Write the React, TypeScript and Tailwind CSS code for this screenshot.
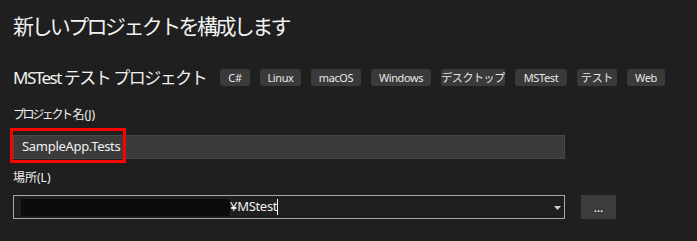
const tags = [
  { label: 'C#', w: 'w-[30px]' },
  { label: 'Linux', w: 'w-[41px]' },
  { label: 'macOS', w: 'w-[50px]' },
  { label: 'Windows', w: 'w-[60px]' },
  { label: 'デスクトップ', w: 'w-[64px]' },
  { label: 'MSTest', w: 'w-[52px]' },
  { label: 'テスト', w: 'w-[40px]' },
  { label: 'Web', w: 'w-[38px]' },
];

const font = { fontFamily: '"Noto Sans", "Noto Sans CJK JP", sans-serif' };

export default function App() {
  return (
    <div
      className="w-[697px] h-[241px] bg-[#1f1f1f] text-[#f1f1f1] pl-[13px] overflow-hidden whitespace-nowrap"
      style={font}
    >
      <h1 className="h-[32px] mt-[10px] text-[21px] leading-[32px] font-normal tracking-[-2.6px]">
        新しいプロジェクトを構成します
      </h1>

      <div className="flex items-center mt-[27px] h-[17px]">
        <h2 className="w-[207px] shrink-0 text-[17px] leading-[17px] font-normal tracking-[-1.5px]">
          MSTest テスト プロジェクト
        </h2>
        <div className="flex gap-[10px]">
          {tags.map((tag) => (
            <span
              key={tag.label}
              className={`${tag.w} shrink-0 h-[17px] rounded-[3px] bg-[#3a3a3a] text-center text-[11px] leading-[17px] text-[#e8e8e8] tracking-[-0.4px]`}
            >
              {tag.label}
            </span>
          ))}
        </div>
      </div>

      {/* project name */}
      <div className="mt-[21px] text-[12px] leading-[16px] h-[16px]">
        <span className="tracking-[-2.4px]">プロジェクト</span>
        <span className="ml-[2px]">名(J)</span>
      </div>
      <div className="relative mt-[12px] w-[552px] h-[24px] bg-[#3b3b3b] border border-[#474747] flex items-center pl-[8px] text-[13px] tracking-[-0.3px]">
        SampleApp.Tests
        <div className="absolute left-[-4px] top-[-8px] w-[116px] h-[35px] border-[3px] border-[#ff0000]" />
      </div>

      {/* location */}
      <div className="mt-[11px] text-[12px] leading-[16px] h-[16px]">場所(L)</div>
      <div className="flex items-center mt-[9px]">
        <div className="relative w-[552px] h-[24px] border border-[#a8a8a8] flex items-center pl-[7px] text-[13px] tracking-[-0.3px]">
          <div className="w-[209px] h-[17px] bg-[#0c0c0c]" />
          <span>¥MStest</span>
          <span className="w-px h-[16px] bg-white" />
          <svg className="absolute right-[3px] top-[10px]" width="7" height="4" viewBox="0 0 7 4">
            <path d="M0 0h7L3.5 4z" fill="#d0d0d0" />
          </svg>
        </div>
        <button className="ml-[16px] w-[35px] h-[24px] bg-[#3c3c3c] text-[12px] leading-[14px] text-white pt-[2px]">
          ...
        </button>
      </div>
    </div>
  );
}
